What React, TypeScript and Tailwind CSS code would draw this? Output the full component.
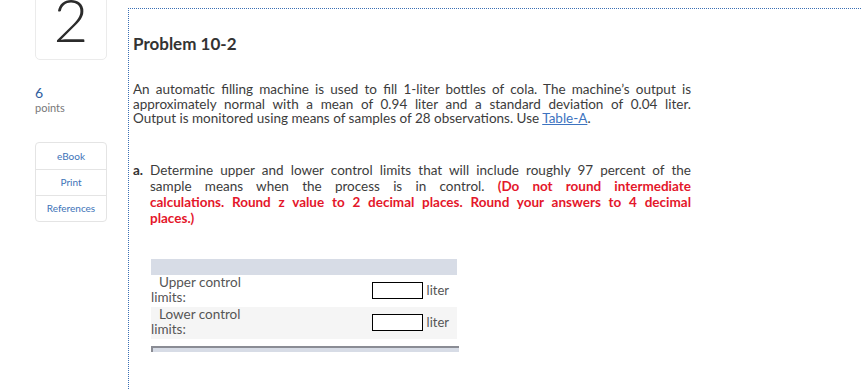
import * as React from "react";

const jl = "whitespace-nowrap text-justify [text-align-last:justify]";

function SideLinks() {
  const items = ["eBook", "Print", "References"];
  return (
    <div className="mt-[28px] w-[72px] rounded-[4px] border border-[#e4e4e4] text-[10px] text-[#3d73b8]">
      {items.map((it, i) => (
        <div
          key={it}
          className={
            "flex items-center justify-center " +
            (i === 0 ? "h-[26px]" : "h-[26px] border-t border-[#e4e4e4]")
          }
        >
          {it}
        </div>
      ))}
    </div>
  );
}

function AnswerRow({ top, bottom, shaded }: { top: string; bottom: string; shaded?: boolean }) {
  return (
    <div className={"flex h-[32px] items-center justify-between pr-[8px] " + (shaded ? "bg-[#f5f5f5]" : "bg-white")}>
      <div className="self-start text-[13.5px] leading-[15px] text-[#555]">
        <div className="pl-[8px]">{top}</div>
        <div>{bottom}</div>
      </div>
      <div className="flex items-center gap-[4px]">
        <div className="h-[17px] w-[51px] border border-black bg-white" />
        <span className="text-[13px] text-[#555]">liter</span>
      </div>
    </div>
  );
}

export default function App() {
  return (
    <div className="flex h-[389px] w-[861px] overflow-hidden bg-white font-['Lato','Liberation_Sans',sans-serif] text-[#3c3c3c]">
      {/* left rail */}
      <div className="w-[128px] shrink-0 pl-[35px]">
        <div className="mt-[-12px] flex h-[72px] w-[72px] justify-center rounded-[5px] border border-[#ebebeb]">
          <span className="text-[60px] font-light leading-none text-[#2b2b2b]">2</span>
        </div>
        <div className="mt-[25px] text-[14px] leading-[16px] text-[#2e5d9e]">6</div>
        <div className="text-[11px] leading-[13px] text-[#777]">points</div>
        <SideLinks />
      </div>

      {/* question panel */}
      <div className="mt-[8px] flex-1 border-l border-t border-dotted border-[#3a6fb5] pl-[4px] pt-[25px]">
        <h2 className="text-[17px] font-bold leading-[20px] text-[#333]">Problem 10-2</h2>

        <div className="mt-[28px] w-[558px] text-[13.5px] leading-[14.5px]">
          <div className={jl}>
            An automatic filling machine is used to fill 1-liter bottles of cola. The machine’s output is
          </div>
          <div className={jl}>
            approximately normal with a mean of 0.94 liter and a standard deviation of 0.04 liter.
          </div>
          <div className="whitespace-nowrap">
            Output is monitored using means of samples of 28 observations. Use{" "}
            <span className="text-[#3d73c0] underline">Table-A</span>.
          </div>
        </div>

        <div className="mt-[36px] flex w-[558px] text-[13.5px] leading-[16px]">
          <div className="w-[17px] shrink-0 font-bold text-[#333]">a.</div>
          <div className="flex-1">
            <div className={jl}>
              Determine upper and lower control limits that will include roughly 97 percent of the
            </div>
            <div className={jl}>
              sample means when the process is in control.{" "}
              <span className="font-bold text-[#e4172b]">(Do not round intermediate</span>
            </div>
            <div className={jl + " font-bold text-[#e4172b]"}>
              calculations. Round z value to 2 decimal places. Round your answers to 4 decimal
            </div>
            <div className="font-bold text-[#e4172b]">places.)</div>
          </div>
        </div>

        <div className="ml-[18px] mt-[33px] w-[308px]">
          <div className="h-[16px] w-[306px] bg-[#d7dce6]" />
          <div className="w-[306px]">
            <AnswerRow top="Upper control" bottom="limits:" />
            <AnswerRow top="Lower control" bottom="limits:" shaded />
          </div>
          <div className="mt-[7px] h-[6px] border-l-2 border-t-2 border-[#8a8c94] bg-[#d7dce6]" />
        </div>
      </div>
    </div>
  );
}
